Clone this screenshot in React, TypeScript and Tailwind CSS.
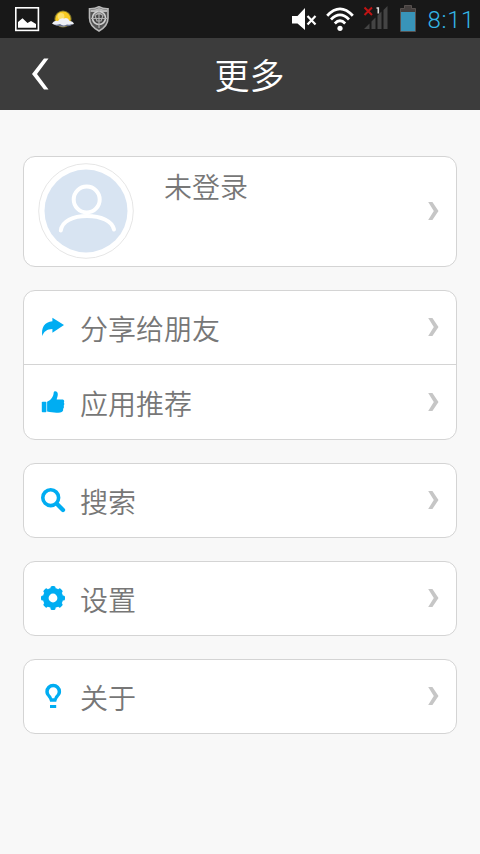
import type { ReactNode } from 'react';

const GEAR_ANGLES = [0, 45, 90, 135, 180, 225, 270, 315];

function StatusBar() {
  return (
    <div className="flex h-[38px] items-center justify-between bg-[#181818]">
      {/* Notifications */}
      <div className="flex items-center pl-[14px]">
        <svg width="26" height="26" viewBox="0 0 26 26">
          <rect x="1.8" y="1.8" width="22.6" height="22.6" fill="none" stroke="#fff" strokeWidth="1.6" />
          <path d="M4 21.7V16L8.5 12.2 13.5 17 17 15 22 18V21.7Z" fill="#fff" />
        </svg>
        <svg className="ml-[10px]" width="26" height="26" viewBox="0 0 26 26">
          <circle cx="13" cy="13" r="8.6" fill="#d9c53a" opacity="0.55" />
          <circle cx="13" cy="13" r="7.6" fill="#f7ca22" />
          <circle cx="11" cy="10.5" r="3.4" fill="#fbe06a" />
          <path d="M2 17.5Q4 14 8 15Q10 11.5 14 12.5Q18 11 19.5 15Q23 15 24 18Q20 19.5 17 19Q13 22 9 19Q5 20 2 17.5Z" fill="#eef0f6" />
          <path d="M4 18.5Q7 19 10 18Q13 20.5 17 18.5Q20 19 23 18Q20 21 16.5 20Q13 21.5 9 20Q6 20 4 18.5Z" fill="#68718c" />
        </svg>
        <svg className="ml-[10px]" width="26" height="26" viewBox="0 0 26 26">
          <path d="M13 .8Q17 3 22 2.8V12Q22 20 13 25Q3.5 20 3.5 12V2.8Q9 3 13 .8Z" fill="#555" stroke="#b8b8b8" strokeWidth="1.6" />
          <path d="M4.5 3.8Q9 4 13 2Q17 4 21.3 3.8V6H4.5Z" fill="#b8b8b8" />
          <circle cx="13" cy="12" r="6.5" fill="#444" stroke="#d0d0d0" strokeWidth="1.6" />
          <path d="M13 3V22M5 12.5H21M9 9.5Q13 5.5 17 9.5L15 15H11Z" fill="none" stroke="#b0b0b0" strokeWidth="1.2" />
        </svg>
      </div>

      {/* Device state */}
      <div className="flex items-center pr-[4px]">
        <svg width="26" height="24" viewBox="0 0 26 24">
          <path d="M1 9H6.500L14 1V23L6.500 16.500H1Z" fill="#fff" />
          <path d="M16.500 9L24.500 17.500M24.500 9L16.500 17.500" stroke="#fff" strokeWidth="2.200" />
        </svg>
        <svg className="ml-[9px]" width="28" height="26" viewBox="0 0 28 26" fill="none" stroke="#fff" strokeWidth="2.8">
          <path d="M1.200 9.700Q14-4 26.800 9.700" />
          <path d="M5 13.500Q14 4.300 23 13.500" />
          <path d="M8.800 17.500Q14 12 19.200 17.500" />
          <circle cx="14" cy="22.300" r="2.600" fill="#fff" stroke="none" />
        </svg>
        <svg className="ml-[9px]" width="26" height="26" viewBox="0 0 26 26">
          <path d="M1.500 1.500L9 9M9 1.500L1.500 9" stroke="#c01414" strokeWidth="2" />
          <path d="M1 23L6.500 17.500V23ZM8.500 23V15.500L12.500 11.500V23ZM14.500 23V9.500L18.500 5.500V23ZM20.500 23V4L24.500 0V23Z" fill="#444" />
          <path d="M13.500 2H15.300V7.500" fill="none" stroke="#ddd" strokeWidth="1.600" />
        </svg>
        <svg className="ml-[10px]" width="18" height="28" viewBox="0 0 18 28">
          <path d="M5.500 .5H12.500V3.500H16.500V26.500H1.500V3.500H5.500Z" fill="#443f3e" stroke="#57504e" />
          <rect x="2" y="7" width="14" height="19" fill="#3894b9" />
        </svg>
        <span className="ml-[10px] mr-px w-[48px] whitespace-nowrap pt-[2px] text-right font-[Roboto,sans-serif] text-[24px] leading-none font-light tracking-[0.6px] text-[#33b5e5]">
          8:11
        </span>
      </div>
    </div>
  );
}

function Chevron() {
  return (
    <svg className="-mt-px mr-[16px] ml-auto" width="12" height="18" viewBox="0 0 12 18">
      <path d="M0.200 0H4.400L10.500 9 4.400 18H0.200L5.800 9Z" fill="#c6c6c6" />
    </svg>
  );
}

function Icon({ children }: { children: ReactNode }) {
  return (
    <svg className="ml-4 shrink-0" width="26" height="27" viewBox="0 0 26 27" fill="#00adf2">
      {children}
    </svg>
  );
}

const shareIcon = (
  <path d="M12.400 3.800L24 11 12.400 18.700V15C7 15.200 3.800 17.500 2.400 22C.800 14 4.500 7.800 12.400 7.200Z" />
);

const thumbIcon = (
  <g transform="translate(0 -1)">
    <rect x="1.800" y="13.800" width="4.600" height="10.400" rx="0.800" />
    <path d="M7.100 13.800C11 12.200 13.500 8.500 13.700 4.500C14 2.500 18 2.800 17.800 6.500C17.700 8.500 16.900 10 16.700 11.400H22.300C24.500 11.400 24.500 13.800 23.800 14.500C24.600 15.500 24.400 17 23.700 17.700C24.200 18.900 23.900 20.200 23.100 20.800C23.500 22.800 22.500 24.400 20.300 24.500C15.500 25 12 24.600 7.100 23.600Z" />
  </g>
);

const searchIcon = (
  <>
    <circle cx="10.700" cy="10.700" r="7.900" fill="none" stroke="#00adf2" strokeWidth="3.600" />
    <path d="M16.800 16.800L23 23" stroke="#00adf2" strokeWidth="4.300" strokeLinecap="round" />
  </>
);

const gearIcon = (
  <>
    <circle cx="13" cy="13" r="7.300" fill="none" stroke="#00adf2" strokeWidth="5.800" />
    {GEAR_ANGLES.map((angle) => (
      <rect key={angle} x="10.500" y="1" width="5" height="5" rx="1.600" transform={`rotate(${angle} 13 13)`} />
    ))}
  </>
);

const bulbIcon = (
  <>
    <path
      fillRule="evenodd"
      d="M13.200 .8A7.900 7.900 0 0 0 5.300 8.700C5.300 12.800 9.500 14 10.100 18.800H16.300C16.900 14 21.100 12.800 21.100 8.700A7.900 7.900 0 0 0 13.200 .8ZM13.200 4.200A4.400 4.400 0 0 1 17.600 8.600C17.600 11.500 15 12.500 14.300 15.200H12.100C11.400 12.500 8.800 11.500 8.800 8.600A4.400 4.400 0 0 1 13.200 4.200Z"
    />
    <rect x="10" y="22" width="6.200" height="3" />
  </>
);

interface MenuItem {
  label: string;
  icon: ReactNode;
}

const groups: MenuItem[][] = [
  [
    { label: '分享给朋友', icon: shareIcon },
    { label: '应用推荐', icon: thumbIcon },
  ],
  [{ label: '搜索', icon: searchIcon }],
  [{ label: '设置', icon: gearIcon }],
  [{ label: '关于', icon: bulbIcon }],
];

function MenuRow({ label, icon }: MenuItem) {
  return (
    <div className="flex h-[74px] items-center only:h-[73px]">
      <Icon>{icon}</Icon>
      <span className="ml-[14px] pt-px text-[28px] leading-none">{label}</span>
      <Chevron />
    </div>
  );
}

export default function App() {
  return (
    <div className="min-h-[854px] w-[480px] bg-[#f8f8f8] font-['Noto_Sans_CJK_SC',sans-serif] font-[350] text-[#777]">
      <StatusBar />

      {/* Title bar */}
      <header className="grid h-[72px] grid-cols-[70px_1fr_50px] items-center bg-[#3c3c3c] text-white">
        <svg className="ml-[31px]" width="19" height="34" viewBox="0 0 19 34">
          <path d="M13 1.500H17.500L6 17 17.500 32.500H13L1 17Z" fill="#fff" />
        </svg>
        <h1 className="pr-px pb-px text-center text-[35px] leading-none">更多</h1>
      </header>

      <main className="flex flex-col gap-[23px] px-[23px] pt-[46px]">
        {/* Account */}
        <section className="flex h-[111px] items-center rounded-xl border border-[#d4d4d4] bg-white pb-px">
          <svg className="ml-[14px]" width="96" height="96" viewBox="0 0 96 96" fill="none">
            <circle cx="48" cy="48" r="47.300" fill="#fff" stroke="#e6e6e6" />
            <circle cx="48" cy="48" r="41.500" fill="#d8e4f2" />
            <g stroke="#fff" strokeWidth="4" strokeLinecap="round">
              <circle cx="48.700" cy="36.500" r="13" />
              <path d="M22.800 67.500C24 58 35 53 49 53S74 58 76 66.500" />
            </g>
          </svg>
          <span className="ml-[30px] self-start pt-[15px] text-[28px] leading-none">未登录</span>
          <Chevron />
        </section>

        {groups.map((items) => (
          <section
            key={items[0].label}
            className="divide-y divide-[#d4d4d4] rounded-xl border border-[#d4d4d4] bg-white"
          >
            {items.map((item) => (
              <MenuRow key={item.label} {...item} />
            ))}
          </section>
        ))}
      </main>
    </div>
  );
}
